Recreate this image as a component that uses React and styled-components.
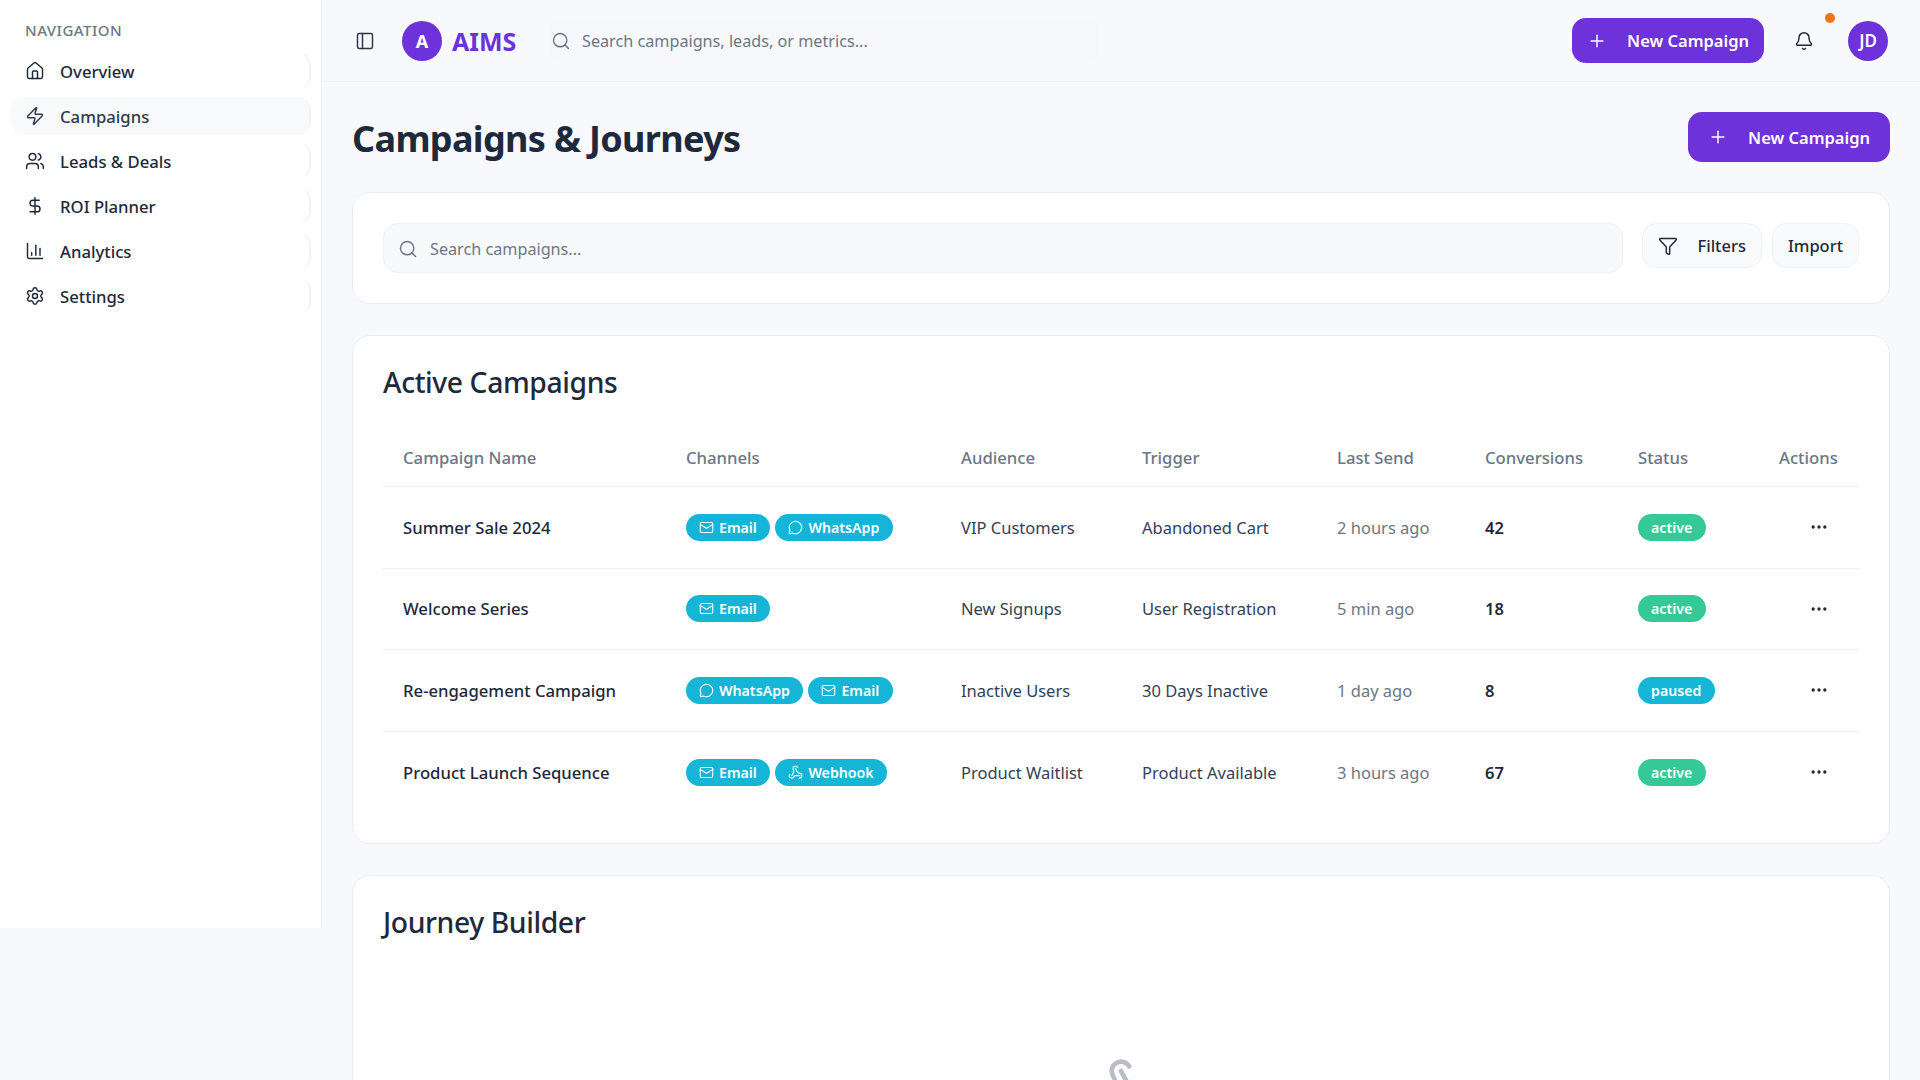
import React from 'react';
import styled, { createGlobalStyle } from 'styled-components';
import {
  Bell,
  ChartColumn,
  DollarSign,
  Ellipsis,
  Filter,
  House,
  Mail,
  MessageCircle,
  PanelLeft,
  Plus,
  Search,
  Settings,
  Users,
  Webhook,
  Zap,
} from 'lucide-react';

const GlobalStyle = createGlobalStyle`
  * { box-sizing: border-box; }
  html, body { margin: 0; height: 100%; overflow: hidden; }
  body {
    background: #f7f9fc;
    color: #1e293b;
    font-family: "Noto Sans", "Open Sans", sans-serif;
  }
`;

const Shell = styled.div`
  display: flex;
  align-items: flex-start;
  height: 1080px;
  overflow: hidden;
`;

const Sidebar = styled.aside`
  flex: 0 0 322px;
  height: 928px;
  padding: 21px 10px 0 10px;
  background: #fff;
  border-right: 1px solid #eceff4;
`;

const NavLabel = styled.div`
  padding-left: 15px;
  margin-bottom: 13px;
  font-size: 15px;
  line-height: 18px;
  font-weight: 500;
  letter-spacing: 0.5px;
  color: #6b7785;
`;

const NavList = styled.nav`
  display: flex;
  flex-direction: column;
  gap: 7px;
`;

const NavItem = styled.a`
  display: flex;
  align-items: center;
  gap: 15px;
  height: 38px;
  padding-left: 15px;
  font-size: 16.7px;
  font-weight: 500;
  color: ${p => (p.$active ? '#2f3b4b' : '#1e293b')};
  background: ${p => (p.$active ? '#f8fafc' : 'transparent')};
  border-radius: 14px;
  border-right: 2px solid #f1f3f6;
`;

const Main = styled.div`
  flex: 1;
  min-width: 0;
`;

const Topbar = styled.header`
  display: flex;
  align-items: center;
  height: 82px;
  padding: 0 32px 0 33px;
  border-bottom: 1px solid #eef1f5;
`;

const ToggleButton = styled.span`
  display: flex;
  color: #2c3645;
  margin-right: 27px;
`;

const LogoMark = styled.span`
  display: flex;
  align-items: center;
  justify-content: center;
  width: 40px;
  height: 40px;
  border-radius: 50%;
  background: #6d32d9;
  color: #fff;
  font-size: 18px;
  font-weight: 700;
`;

const LogoText = styled.span`
  margin-left: 10px;
  width: 98px;
  font-size: 25px;
  font-weight: 700;
  color: #6d32d9;
`;

const TopSearch = styled.div`
  display: flex;
  align-items: center;
  gap: 11px;
  width: 548px;
  height: 44px;
  padding-left: 1px;
  font-size: 16.2px;
  color: #6b7785;
  border-radius: 12px;
  background: #f6f8fb;

  svg {
    color: #6b7785;
  }
`;

const TopActions = styled.div`
  display: flex;
  align-items: center;
  margin-left: auto;
`;

const PrimaryButton = styled.button`
  display: flex;
  align-items: center;
  gap: 20px;
  height: ${p => (p.$large ? '50px' : '45px')};
  padding: 0 ${p => (p.$large ? '20px' : '15px')};
  border: 0;
  border-radius: 14px;
  background: #6d32d9;
  color: #fff;
  font-family: inherit;
  font-size: 16.5px;
  font-weight: 600;
`;

const BellWrap = styled.span`
  position: relative;
  display: flex;
  margin-left: 30px;
  margin-right: 34px;
  color: #1e293b;
`;

const NotifyDot = styled.span`
  position: absolute;
  top: -18px;
  right: -21px;
  width: 10px;
  height: 10px;
  border-radius: 50%;
  background: #f47316;
`;

const Avatar = styled(LogoMark)`
  font-size: 17px;
  font-weight: 600;
`;

const Content = styled.main`
  padding: 30px 30px 0 30px;
`;

const PageHead = styled.div`
  display: flex;
  align-items: center;
  justify-content: space-between;
  height: 50px;
  margin-bottom: 30px;
`;

const PageTitle = styled.h1`
  margin: 0;
  padding-top: 2px;
  font-size: 36px;
  font-weight: 700;
  letter-spacing: -0.65px;
  color: #1e293b;
`;

const Card = styled.section`
  background: #fff;
  border: 1px solid #e9edf2;
  border-radius: 18px;
  padding: 30px;
  margin-bottom: 30.5px;
`;

const FilterCard = styled(Card)`
  height: 112px;
  margin-bottom: 31px;
`;

const FilterRow = styled.div`
  display: flex;
  align-items: flex-start;
  gap: 10px;
`;

const SearchField = styled.div`
  flex: 1;
  display: flex;
  align-items: center;
  gap: 12px;
  height: 50px;
  padding: 1px 0 0 14px;
  margin-right: 9px;
  background: #f7f9fb;
  border: 1px solid #eff2f5;
  border-radius: 14px;
  font-size: 16.2px;
  color: #6b7785;
`;

const GhostButton = styled.button`
  display: flex;
  align-items: center;
  gap: 20px;
  height: 45px;
  padding: 0 15px;
  background: #f8fafc;
  border: 1px solid #eff2f5;
  border-radius: 14px;
  font-family: inherit;
  font-size: 16.5px;
  font-weight: 500;
  color: #1e293b;
`;

const CardTitle = styled.h2`
  margin: 0 0 ${p => p.$gap || 0}px;
  font-size: 28.3px;
  line-height: 33px;
  font-weight: 500;
  letter-spacing: -0.4px;
  color: #1e293b;
`;

const Row = styled.div`
  display: grid;
  grid-template-columns: 283px 275px 181px 195px 148px 153px 141px 100px;
  align-items: center;
  height: ${p => (p.$head ? '59px' : '81.5px')};
  border-bottom: ${p => (p.$last ? '0' : '1.5px solid #eef1f4')};
`;

const HeadCell = styled.div`
  padding-left: 20px;
  font-size: 16.7px;
  font-weight: 500;
  color: #6b7785;
`;

const Cell = styled.div`
  display: flex;
  align-items: center;
  gap: 5px;
  padding-left: 20px;
  font-size: ${p => p.$size || 16.5}px;
  color: ${p => p.$color || '#334155'};
  font-weight: ${p => p.$weight || 400};
`;

const Pill = styled.span`
  display: inline-flex;
  align-items: center;
  gap: 5px;
  height: 27px;
  padding: 0 13.5px 0 13px;
  border-radius: 14px;
  background: ${p => p.$bg || '#14b5d6'};
  color: #fff;
  font-size: 14.2px;
  font-weight: 600;
  white-space: nowrap;
`;

const ActionDots = styled.span`
  display: flex;
  justify-content: center;
  width: 79px;
  color: #1e293b;
`;

const JourneyBody = styled.div`
  display: flex;
  justify-content: center;
  padding-top: 118px;
  color: #b9bec6;
`;

const navItems = [
  { label: 'Overview', icon: House },
  { label: 'Campaigns', icon: Zap, active: true },
  { label: 'Leads & Deals', icon: Users },
  { label: 'ROI Planner', icon: DollarSign },
  { label: 'Analytics', icon: ChartColumn },
  { label: 'Settings', icon: Settings },
];

const channelIcons = { Email: Mail, WhatsApp: MessageCircle, Webhook: Webhook };

const campaigns = [
  { name: 'Summer Sale 2024', channels: ['Email', 'WhatsApp'], audience: 'VIP Customers', trigger: 'Abandoned Cart', last: '2 hours ago', conv: 42, status: 'active' },
  { name: 'Welcome Series', channels: ['Email'], audience: 'New Signups', trigger: 'User Registration', last: '5 min ago', conv: 18, status: 'active' },
  { name: 'Re-engagement Campaign', channels: ['WhatsApp', 'Email'], audience: 'Inactive Users', trigger: '30 Days Inactive', last: '1 day ago', conv: 8, status: 'paused' },
  { name: 'Product Launch Sequence', channels: ['Email', 'Webhook'], audience: 'Product Waitlist', trigger: 'Product Available', last: '3 hours ago', conv: 67, status: 'active' },
];

const headers = ['Campaign Name', 'Channels', 'Audience', 'Trigger', 'Last Send', 'Conversions', 'Status', 'Actions'];

export default function App() {
  return (
    <>
      <GlobalStyle />
      <Shell>
        <Sidebar>
          <NavLabel>NAVIGATION</NavLabel>
          <NavList>
            {navItems.map(({ label, icon: Icon, active }) => (
              <NavItem key={label} $active={active}>
                <Icon size={20} strokeWidth={1.75} />
                {label}
              </NavItem>
            ))}
          </NavList>
        </Sidebar>
        <Main>
          <Topbar>
            <ToggleButton><PanelLeft size={20} strokeWidth={1.75} /></ToggleButton>
            <LogoMark>A</LogoMark>
            <LogoText>AIMS</LogoText>
            <TopSearch>
              <Search size={20} strokeWidth={1.75} />
              Search campaigns, leads, or metrics...
            </TopSearch>
            <TopActions>
              <PrimaryButton><Plus size={20} strokeWidth={1.75} />New Campaign</PrimaryButton>
              <BellWrap>
                <Bell size={20} strokeWidth={1.75} />
                <NotifyDot />
              </BellWrap>
              <Avatar>JD</Avatar>
            </TopActions>
          </Topbar>
          <Content>
            <PageHead>
              <PageTitle>Campaigns &amp; Journeys</PageTitle>
              <PrimaryButton $large><Plus size={20} strokeWidth={1.75} />New Campaign</PrimaryButton>
            </PageHead>
            <FilterCard>
              <FilterRow>
                <SearchField>
                  <Search size={20} strokeWidth={1.75} />
                  Search campaigns...
                </SearchField>
                <GhostButton><Filter size={20} strokeWidth={1.75} />Filters</GhostButton>
                <GhostButton>Import</GhostButton>
              </FilterRow>
            </FilterCard>
            <Card>
              <CardTitle $gap={29}>Active Campaigns</CardTitle>
              <Row $head>
                {headers.map(h => <HeadCell key={h}>{h}</HeadCell>)}
              </Row>
              {campaigns.map((c, i) => (
                <Row key={c.name} $last={i === campaigns.length - 1}>
                  <Cell $color="#1e293b" $weight={500} $size={16.7}>{c.name}</Cell>
                  <Cell>
                    {c.channels.map(ch => {
                      const Icon = channelIcons[ch];
                      return <Pill key={ch}><Icon size={15} strokeWidth={1.75} />{ch}</Pill>;
                    })}
                  </Cell>
                  <Cell>{c.audience}</Cell>
                  <Cell>{c.trigger}</Cell>
                  <Cell $color="#6b7785">{c.last}</Cell>
                  <Cell $color="#1e293b" $weight={600}>{c.conv}</Cell>
                  <Cell>
                    <Pill $bg={c.status === 'active' ? '#34c997' : '#14b5d6'}>{c.status}</Pill>
                  </Cell>
                  <Cell><ActionDots><Ellipsis size={20} strokeWidth={2} /></ActionDots></Cell>
                </Row>
              ))}
            </Card>
            <Card>
              <CardTitle>Journey Builder</CardTitle>
              <JourneyBody>
                <Webhook size={56} strokeWidth={2} />
              </JourneyBody>
            </Card>
          </Content>
        </Main>
      </Shell>
    </>
  );
}
